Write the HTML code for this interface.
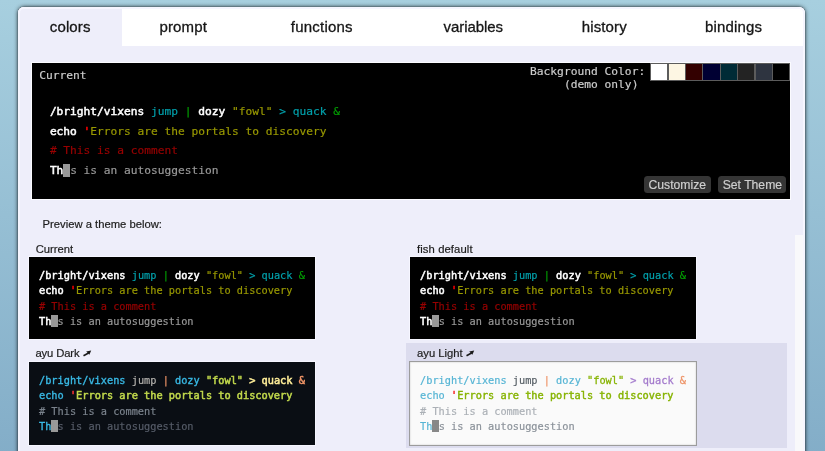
<!DOCTYPE html>
<html>
<head>
<meta charset="utf-8">
<title>fish shell configuration</title>
<style>
html, body { margin: 0; padding: 0; }
body {
  width: 825px; height: 451px; overflow: hidden; position: relative;
  background: linear-gradient(to bottom, #a7cfdf 0px, #23538a 1670px);
  font-family: "Liberation Sans", Arial, sans-serif;
  color: #222;
}
#panel {
  will-change: transform;
  position: absolute; left: 18px; top: 6.65px; width: 787px; height: 500px;
  background: #eeeefa;
  border-radius: 6px 6px 0 0;
  box-shadow: 0 0 1.2px 0 rgba(0,0,0,0.6), 0 0 4px 0 rgba(0,0,0,0.85);
}
#tabbar {
  position: absolute; left: 0; top: 0; width: 787px; height: 38.6px;
  background: #fff; border-radius: 6px 6px 0 0; overflow: hidden;
}
.tab {
  position: absolute; top: 0; height: 38.6px; line-height: 40.6px;
  font-size: 15px; text-align: center; color: #161616; -webkit-text-stroke: 0.3px #161616; letter-spacing: 0.15px;
  white-space: nowrap;
}
.tab.sel { background: #eeeefa; }
.mono { -webkit-text-stroke: 0.18px currentColor; font-family: "DejaVu Sans Mono", "Liberation Mono", monospace; }
#main {
  position: absolute; left: 13.2px; top: 55.35px; width: 759.7px; height: 137.9px;
  background: #000; border: 1px solid #fbfbff; box-sizing: border-box;
}
#main .hdr { position: absolute; left: 7px; top: 6px; font-size: 11.25px; line-height: 14px; color: #ccc; }
#main .demo { position: absolute; left: 17.7px; top: 38.2px; font-size: 11.21px; line-height: 19.8px; white-space: pre; color: #fff; }
.bgl { position: absolute; font-size: 11.25px; line-height: 12.6px; color: #ccc; white-space: pre; text-align: right; }
.sw { position: absolute; top: 0; width: 18.2px; height: 17.5px; box-sizing: border-box; border: 1px solid #5c5c5c; }
.btn { font-family: "Liberation Sans", Arial, sans-serif;
  position: absolute; top: 112.7px; height: 17px; line-height: 18.8px; box-sizing: border-box;
  background: #353535; color: #cfcfcf; font-size: 12.2px; border-radius: 3.5px; text-align: center;
  white-space: nowrap;
}
.lbl { position: absolute; font-size: 11.25px; line-height: 14px; color: #1c1c1c; -webkit-text-stroke: 0.2px #1c1c1c; white-space: nowrap; }
.pv {
  position: absolute; width: 288px; height: 84px; box-sizing: border-box; border: 1px solid #f6f6ff;
}
.pv .t { position: absolute; left: 9.9px; top: 10.85px; font-size: 10.27px; line-height: 15.2px; white-space: pre; }
b { font-weight: normal; -webkit-text-stroke: 0.5px currentColor; }
.sb { -webkit-text-stroke-width: 0.34px; }
.sl { -webkit-text-stroke-width: 0.26px; }
.lt b { -webkit-text-stroke-width: 0.4px; }
.cur { background: #999; color: #999; }
</style>
</head>
<body>
<div id="panel">
  <div id="tabbar">
    <div class="tab sel" style="left:0;width:104.4px;">colors</div>
    <div class="tab" style="left:104.4px;width:121.6px;">prompt</div>
    <div class="tab" style="left:226.8px;width:154px;letter-spacing:0.23px">functions</div>
    <div class="tab" style="left:380.3px;width:150px;letter-spacing:-0.07px">variables</div>
    <div class="tab" style="left:529.3px;width:114px;">history</div>
    <div class="tab" style="left:644px;width:143px;">bindings</div>
  </div>

  <div id="main" class="mono">
    <div class="hdr">Current</div>
    <div class="bgl" style="right:144.7px; top:2.6px;">Background Color:
(demo only) </div>
    <div style="position:absolute; left:618.0px; top:-0.2px; width:141px; height:18px;">
      <div class="sw" style="left:0.0px;background:#fff"></div>
      <div class="sw" style="left:17.4px;background:#fdf6e3"></div>
      <div class="sw" style="left:34.8px;background:#300"></div>
      <div class="sw" style="left:52.2px;background:#003"></div>
      <div class="sw" style="left:69.6px;background:#002b36"></div>
      <div class="sw" style="left:87.0px;background:#232323"></div>
      <div class="sw" style="left:104.4px;background:#2e3440"></div>
      <div class="sw" style="left:121.8px;background:#000"></div>
    </div>
    <div class="demo"><b>/bright/vixens</b> <span style="color:#00a0ab">jump</span> <span style="color:#00a000">|</span> <b>dozy</b> <span style="color:#999900">"fowl"</span> <span style="color:#00a0ab">&gt; quack</span> <span style="color:#00a000">&amp;</span>
<span style="position:relative; top:0.7px"><b>echo</b> <b style="color:#ff0000">'</b><span style="color:#999900">Errors are the portals to discovery</span></span>
<span style="color:#990000"># This is a comment</span>
<b>Th</b><span class="cur">i</span><span style="color:#999">s is an autosuggestion</span></div>
    <div class="btn" style="left:611.9px;width:66.5px;">Customize</div>
    <div class="btn" style="left:686.2px;width:68px;">Set Theme</div>
  </div>

  <div class="lbl" style="left:24.5px; top:210px;">Preview a theme below:</div>

  <div class="lbl" style="left:17.7px; top:234.6px;">Current</div>
  <div class="pv mono" style="left:10.1px; top:249.4px; background:#000; color:#fff;">
    <div class="t"><b>/bright/vixens</b> <span style="color:#00a0ab">jump</span> <span style="color:#00a000">|</span> <b>dozy</b> <span style="color:#999900">"fowl"</span> <span style="color:#00a0ab">&gt; quack</span> <span style="color:#00a000">&amp;</span>
<b>echo</b> <b style="color:#ff0000">'</b><span style="color:#999900">Errors are the portals to discovery</span>
<span style="color:#990000"># This is a comment</span>
<b>Th</b><span class="cur">i</span><span style="color:#999">s is an autosuggestion</span></div>
  </div>

  <div class="lbl" style="left:399px; top:234.6px; letter-spacing:0.1px;">fish default</div>
  <div class="pv mono" style="left:391.2px; top:249.4px; background:#000; color:#fff;">
    <div class="t"><b>/bright/vixens</b> <span style="color:#00a0ab">jump</span> <span style="color:#00a000">|</span> <b>dozy</b> <span style="color:#999900">"fowl"</span> <span style="color:#00a0ab">&gt; quack</span> <span style="color:#00a000">&amp;</span>
<b>echo</b> <b style="color:#ff0000">'</b><span style="color:#999900">Errors are the portals to discovery</span>
<span style="color:#990000"># This is a comment</span>
<b>Th</b><span class="cur">i</span><span style="color:#999">s is an autosuggestion</span></div>
  </div>

  <div style="position:absolute; left:388.3px; top:335.9px; width:381px; height:104.8px; background:#dcdcee;"></div>

  <div class="lbl" style="left:17.4px; top:338.7px; letter-spacing:-0.12px;">ayu Dark</div>
  <svg style="position:absolute; left:65.0px; top:343.15000000000003px;" width="9" height="7" viewBox="0 0 9 7"><line x1="0.5" y1="5.7" x2="5.6" y2="3.0" stroke="#1a1a1a" stroke-width="1.6"/><polygon points="3.2,1.5 8.2,0.4 6.4,4.7" fill="#1a1a1a"/></svg>
  <div class="pv mono" style="left:10.1px; top:354.2px; height:85px; background:#0a0e14; color:#b3b1ad;">
    <div class="t"><span class="sb" style="color:#39bae6">/bright/vixens</span> <span style="color:#b3b1ad">jump</span> <span style="color:#f29668">|</span> <span class="sb" style="color:#39bae6">dozy</span> <b style="color:#c2d94c">"fowl"</b> <b style="color:#ffee99">&gt; quack</b> <b style="color:#f29668">&amp;</b>
<span class="sb" style="color:#39bae6">echo</span> <b style="color:#ff3333">'</b><b style="color:#c2d94c">Errors are the portals to discovery</b>
<span style="color:#7b838d; position:relative; top:0.8px"># This is a comment</span>
<span class="sb" style="color:#39bae6">Th</span><span class="cur">i</span><span style="color:#565c68">s is an autosuggestion</span></div>
  </div>

  <div class="lbl" style="left:399px; top:338.7px;">ayu Light</div>
  <svg style="position:absolute; left:448.0px; top:343.05px;" width="9" height="7" viewBox="0 0 9 7"><line x1="0.5" y1="5.7" x2="5.6" y2="3.0" stroke="#1a1a1a" stroke-width="1.6"/><polygon points="3.2,1.5 8.2,0.4 6.4,4.7" fill="#1a1a1a"/></svg>
  <div class="pv mono" style="left:391.2px; top:354.2px; height:85px; background:#fafafa; color:#575f66; border:1px solid #9c9c9c; box-shadow: inset 0 0 1.5px rgba(0,0,0,0.3);">
    <div class="t lt"><span style="color:#55b4d4">/bright/vixens</span> <span style="color:#575f66">jump</span> <span style="color:#ed9366">|</span> <span style="color:#55b4d4">dozy</span> <span class="sl" style="color:#86b300">"fowl"</span> <span class="sl" style="color:#a37acc">&gt; quack</span> <span class="sl" style="color:#ed9366">&amp;</span>
<span style="color:#55b4d4">echo</span> <b style="color:#f51818">'</b><b style="color:#86b300">Errors are the portals to discovery</b>
<span style="color:#abb0b6; position:relative; top:0.8px"># This is a comment</span>
<span style="color:#55b4d4">Th</span><span class="cur" style="background:#888;color:#888">i</span><span style="color:#8a9199">s is an autosuggestion</span></div>
  </div>

  <div style="position:absolute; left:777.3px; top:228.3px; width:9.7px; height:300px; background:#f9f9fb;"></div>
  <div style="position:absolute; left:0; top:0; width:787px; height:500px; box-sizing:border-box; border:2.2px solid #f6f6ff; border-bottom:none; border-radius:6px 6px 0 0;"></div>
</div>
</body>
</html>
